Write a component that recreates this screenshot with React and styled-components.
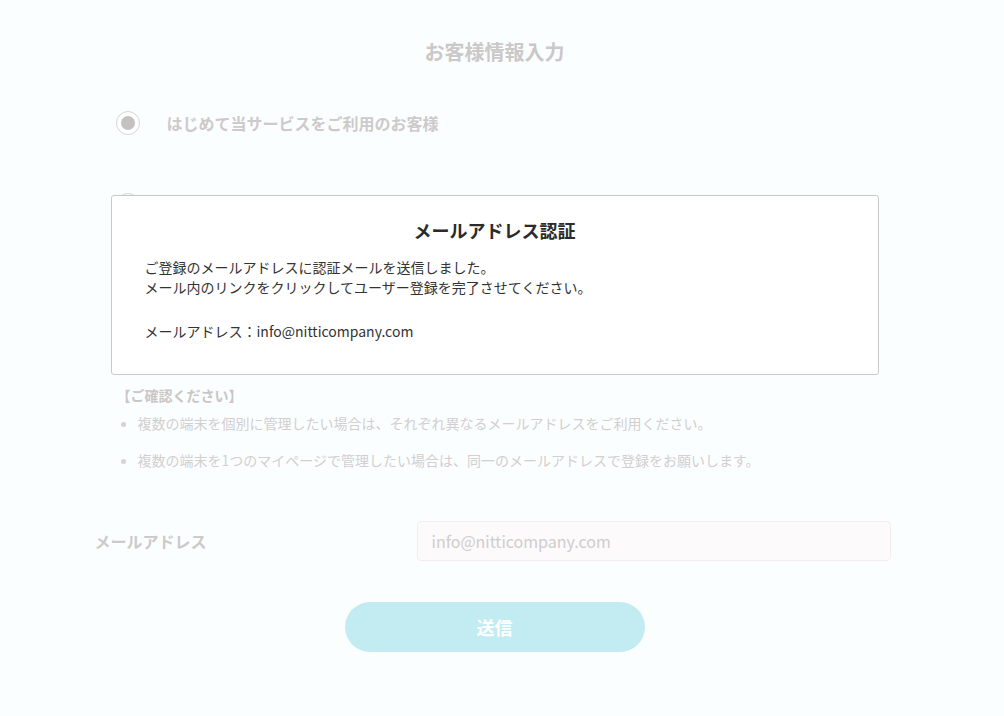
import React from 'react';
import styled, { createGlobalStyle } from 'styled-components';

const GlobalStyle = createGlobalStyle`
  html, body {
    margin: 0;
    padding: 0;
  }
  body {
    padding-right: 15px;
    background: #fbfefe;
    font-family: "Noto Sans CJK JP", "Noto Sans", sans-serif;
    color: #333;
  }
`;

const Page = styled.main`
  width: 800px;
  margin: 0 auto;
  padding: 37px 0 60px;
  box-sizing: border-box;
`;

const Title = styled.h1`
  margin: 0;
  text-align: center;
  font-size: 20px;
  line-height: 30px;
  font-weight: 700;
  color: #cbc8c8;
`;

const Options = styled.div`
  display: flex;
  flex-direction: column;
  gap: 58px;
  margin-top: 44px;
  padding-left: 21px;
`;

const Option = styled.label`
  display: flex;
  align-items: center;
  gap: 27px;
  font-size: 16px;
  line-height: 24px;
  font-weight: 700;
  color: #cdcaca;
`;

const Radio = styled.span`
  width: 24px;
  height: 24px;
  box-sizing: border-box;
  border-radius: 50%;
  border: 1px solid #d8d5d5;
  background: #fff;
  display: flex;
  align-items: center;
  justify-content: center;

  &::after {
    content: "";
    width: 14px;
    height: 14px;
    border-radius: 50%;
    background: ${(p) => (p.$checked ? '#c5c1c1' : 'transparent')};
  }
`;

const Notice = styled.section`
  margin-top: 168px;
`;

const NoticeHead = styled.h2`
  margin: 0;
  padding-left: 22px;
  font-size: 14px;
  line-height: 20px;
  font-weight: 700;
  color: #c9c6c6;
`;

const NoticeList = styled.ul`
  margin: 8px 0 0;
  padding: 0 0 0 43px;
  display: flex;
  flex-direction: column;
  gap: 17px;
`;

const NoticeItem = styled.li`
  font-size: 14px;
  line-height: 20px;
  color: #d2cfcf;

  &::marker {
    color: #d6d3d3;
  }
`;

const Field = styled.div`
  display: grid;
  grid-template-columns: 322px 1fr;
  align-items: center;
  margin-top: 51px;
  padding-right: 4px;
`;

const FieldLabel = styled.span`
  font-size: 16px;
  font-weight: 700;
  color: #cdcaca;
`;

const Input = styled.div`
  height: 40px;
  box-sizing: border-box;
  border: 1px solid #f2eeee;
  border-radius: 4px;
  background: #fcfafa;
  padding: 0 14px;
  display: flex;
  align-items: center;
  font-size: 16px;
  color: #d0cdcd;
`;

const Actions = styled.div`
  display: flex;
  justify-content: center;
  margin-top: 41px;
`;

const SubmitButton = styled.button`
  width: 300px;
  height: 50px;
  border: none;
  border-radius: 25px;
  background: #c3ecf2;
  color: #fff;
  font-family: inherit;
  font-size: 18px;
  font-weight: 700;
`;

const Overlay = styled.div`
  position: fixed;
  inset: 0;
  padding-right: 15px;
  display: flex;
  justify-content: center;
  align-items: flex-start;
`;

const Dialog = styled.div`
  margin-top: 195px;
  width: 768px;
  height: 180px;
  box-sizing: border-box;
  background: #fff;
  border: 1px solid #c9c9c9;
  border-radius: 3px;
  padding: 20px 33px 0;
`;

const DialogTitle = styled.h3`
  margin: 0;
  text-align: center;
  font-size: 18px;
  line-height: 28px;
  font-weight: 700;
  color: #2b2b2b;
`;

const DialogText = styled.p`
  margin: ${(p) => p.$gap || 0}px 0 0;
  font-size: 14px;
  line-height: 20px;
  color: #333;
`;

export default function App() {
  return (
    <>
      <GlobalStyle />
      <Page>
        <Title>お客様情報入力</Title>
        <Options>
          <Option>
            <Radio $checked />
            はじめて当サービスをご利用のお客様
          </Option>
          <Option>
            <Radio />
            会員登録済みのお客様
          </Option>
        </Options>
        <Notice>
          <NoticeHead>【ご確認ください】</NoticeHead>
          <NoticeList>
            <NoticeItem>複数の端末を個別に管理したい場合は、それぞれ異なるメールアドレスをご利用ください。</NoticeItem>
            <NoticeItem>複数の端末を1つのマイページで管理したい場合は、同一のメールアドレスで登録をお願いします。</NoticeItem>
          </NoticeList>
        </Notice>
        <Field>
          <FieldLabel>メールアドレス</FieldLabel>
          <Input>info@nitticompany.com</Input>
        </Field>
        <Actions>
          <SubmitButton>送信</SubmitButton>
        </Actions>
      </Page>
      <Overlay>
        <Dialog>
          <DialogTitle>メールアドレス認証</DialogTitle>
          <DialogText $gap={13}>
            ご登録のメールアドレスに認証メールを送信しました。
            <br />
            メール内のリンクをクリックしてユーザー登録を完了させてください。
          </DialogText>
          <DialogText $gap={24}>メールアドレス：info@nitticompany.com</DialogText>
        </Dialog>
      </Overlay>
    </>
  );
}
